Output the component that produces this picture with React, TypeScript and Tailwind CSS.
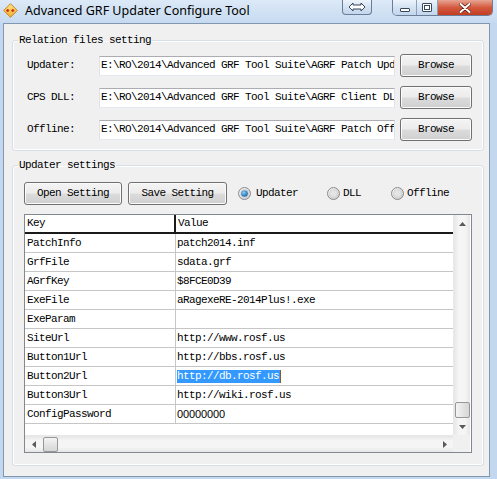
import React from "react";

const mono = "font-['Liberation_Mono','DejaVu_Sans_Mono',monospace] text-[11px] tracking-[-0.6px] text-black";
const btn =
  "flex items-center justify-center rounded-[3px] border border-[#707070] bg-[linear-gradient(to_bottom,#f4f4f4_0%,#ececec_48%,#dcdcdc_52%,#cfcfcf_100%)] shadow-[inset_0_0_0_1px_#fbfbfb]";

const files = [
  { label: "Updater:", path: "E:\\RO\\2014\\Advanced GRF Tool Suite\\AGRF Patch Upd" },
  { label: "CPS DLL:", path: "E:\\RO\\2014\\Advanced GRF Tool Suite\\AGRF Client DL" },
  { label: "Offline:", path: "E:\\RO\\2014\\Advanced GRF Tool Suite\\AGRF Patch Off" },
];

const rows = [
  ["PatchInfo", "patch2014.inf"],
  ["GrfFile", "sdata.grf"],
  ["AGrfKey", "$8FCE0D39"],
  ["ExeFile", "aRagexeRE-2014Plus!.exe"],
  ["ExeParam", ""],
  ["SiteUrl", "http://www.rosf.us"],
  ["Button1Url", "http://bbs.rosf.us"],
  ["Button2Url", "http://db.rosf.us"],
  ["Button3Url", "http://wiki.rosf.us"],
  ["ConfigPassword", "00000000"],
];

function Radio({ checked }: { checked?: boolean }) {
  return (
    <svg width="13" height="13" viewBox="0 0 13 13">
      <defs>
        <radialGradient id="rb" cx="0.35" cy="0.35" r="0.7">
          <stop offset="0" stopColor="#ffffff" />
          <stop offset="1" stopColor="#cfcfcf" />
        </radialGradient>
        <radialGradient id="rd" cx="0.4" cy="0.35" r="0.7">
          <stop offset="0" stopColor="#8fd0f6" />
          <stop offset="1" stopColor="#0d5ea6" />
        </radialGradient>
      </defs>
      <circle cx="6.5" cy="6.5" r="6" fill="url(#rb)" stroke="#8a8a8a" />
      <circle cx="6.5" cy="6.5" r="4" fill="#e4e4e4" stroke="#c4c4c4" strokeWidth="0.6" />
      {checked && <circle cx="6.5" cy="6.5" r="3.3" fill="url(#rd)" />}
    </svg>
  );
}

function Arrow({ dir }: { dir: "up" | "down" | "left" | "right" }) {
  const pts = {
    up: "0,4 3.5,0 7,4",
    down: "0,0 3.5,4 7,0",
    left: "4,0 0,3.5 4,7",
    right: "0,0 4,3.5 0,7",
  }[dir];
  const vertical = dir === "up" || dir === "down";
  return (
    <svg width={vertical ? 7 : 4} height={vertical ? 4 : 7}>
      <polygon points={pts} fill="#5a5a5a" />
    </svg>
  );
}

export default function App() {
  return (
    <div className="flex h-[479px] w-[497px] flex-col overflow-hidden bg-[#c3d7ee] font-['Noto_Sans',sans-serif]">
      {/* Title bar */}
      <div className="flex h-[23px] shrink-0 items-start bg-[linear-gradient(to_bottom,#dce9f7,#c6daf0)]">
        <svg className="ml-[3px] mt-[3px]" width="15" height="15" viewBox="0 0 15 15">
          <defs>
            <linearGradient id="ic" x1="0" y1="0" x2="0" y2="1">
              <stop offset="0" stopColor="#fde58a" />
              <stop offset="1" stopColor="#f0b02a" />
            </linearGradient>
          </defs>
          <path d="M7.5 0.7 L14.3 7.5 L7.5 14.3 L0.7 7.5Z" fill="url(#ic)" stroke="#c9831c" />
          <path d="M3.2 7.5h3M4.7 6v3M8.3 7.5h3M9.8 6v3" stroke="#d0301c" strokeWidth="1.3" />
        </svg>
        <span className="ml-[7px] mt-[2px] text-[12.5px] leading-[18px] text-black">
          Advanced GRF Updater Configure Tool
        </span>
        <div className="ml-auto flex items-start">
          <div className="mr-[20px] flex h-[15px] w-[30px] items-center justify-center rounded-b-[4px] border border-t-0 border-[#6b7d96] bg-[linear-gradient(to_bottom,#eef4fb,#d3e2f2_50%,#c3d6ec)]">
            <svg width="18" height="10" viewBox="0 0 18 10">
              <polygon points="1,5 5,1 5,3 13,3 13,1 17,5 13,9 13,7 5,7 5,9" fill="#fff" stroke="#39475a" strokeWidth="1" />
            </svg>
          </div>
          <div className="mr-[4px] flex h-[16px] overflow-hidden rounded-b-[5px] border border-t-0 border-[#6b7d96]">
            <div className="flex w-[24px] items-center justify-center border-r border-[#8ea0b8] bg-[linear-gradient(to_bottom,#eef4fb,#d3e2f2_50%,#c3d6ec)]">
              <div className="mt-[4px] h-[4px] w-[10px] rounded-[1px] border border-[#39475a] bg-white" />
            </div>
            <div className="flex w-[21px] items-center justify-center border-r border-[#8ea0b8] bg-[linear-gradient(to_bottom,#eef4fb,#d3e2f2_50%,#c3d6ec)]">
              <div className="h-[9px] w-[10px] rounded-[1px] border border-[#39475a] bg-white p-[1px]">
                <div className="h-full w-full border border-[#39475a]" />
              </div>
            </div>
            <div className="flex w-[54px] items-center justify-center bg-[linear-gradient(to_bottom,#e8a593,#d4593f_50%,#c33d22)]">
              <svg width="12" height="10" viewBox="0 0 12 10">
                <path d="M1.5 1 L10.5 9 M10.5 1 L1.5 9" stroke="#5a1c10" strokeWidth="3.4" strokeLinecap="round" />
                <path d="M1.5 1 L10.5 9 M10.5 1 L1.5 9" stroke="#fff" strokeWidth="2" strokeLinecap="round" />
              </svg>
            </div>
          </div>
        </div>
      </div>

      {/* Client area */}
      <div className="ml-[3px] flex h-[454px] w-[487px] flex-col border border-[#8196b1] bg-[#f0f0f0]">
        {/* Relation files setting */}
        <fieldset className="ml-[8px] mt-[10px] w-[472px] rounded-[3px] border border-[#d5dfe5] shadow-[inset_0_0_0_1px_#ffffff]">
          <legend className={`ml-[5px] px-[1px] leading-[12px] ${mono}`}>Relation files setting</legend>
          <div className="flex flex-col gap-[9px] pb-[9px] pl-[14px] pr-[10px] pt-[8px]">
            {files.map((f) => (
              <div key={f.label} className="flex h-[23px] items-center">
                <span className={`w-[72px] ${mono}`}>{f.label}</span>
                <div className="flex h-[20px] w-[296px] items-center overflow-hidden whitespace-nowrap border border-[#abadb3] border-l-[#e2e3ea] border-r-[#e2e3ea] border-b-[#e3e9ef] bg-white pl-[1px]">
                  <span className={mono}>{f.path}</span>
                </div>
                <div className={`ml-[5px] h-[23px] w-[72px] ${btn}`}>
                  <span className={mono}>Browse</span>
                </div>
              </div>
            ))}
          </div>
        </fieldset>

        {/* Updater settings */}
        <fieldset className="ml-[8px] mt-[8px] w-[472px] rounded-[3px] border border-[#d5dfe5] shadow-[inset_0_0_0_1px_#ffffff]">
          <legend className={`ml-[5px] px-[1px] leading-[12px] ${mono}`}>Updater settings</legend>
          <div className="pb-[12px] pl-[11px] pt-[11px]">
            <div className="flex h-[23px] items-center">
              <div className={`h-[23px] w-[98px] ${btn}`}>
                <span className={mono}>Open Setting</span>
              </div>
              <div className={`ml-[6px] h-[23px] w-[99px] ${btn}`}>
                <span className={mono}>Save Setting</span>
              </div>
              <div className="ml-[11px] flex w-[89px] items-center gap-[5px]">
                <Radio checked />
                <span className={mono}>Updater</span>
              </div>
              <div className="flex w-[64px] items-center gap-[3px]">
                <Radio />
                <span className={mono}>DLL</span>
              </div>
              <div className="flex items-center gap-[3px]">
                <Radio />
                <span className={mono}>Offline</span>
              </div>
            </div>

            {/* Grid */}
            <div className="mt-[9px] flex h-[239px] w-[448px] flex-col border border-[#828790] bg-white">
              <div className="flex h-[220px]">
                <div className="flex w-[428px] flex-col">
                  <div className="flex h-[19px] shrink-0 border-b-2 border-[#1a1a1a]">
                    <div className="flex w-[151px] items-center border-r-2 border-[#1a1a1a] pl-[2px]">
                      <span className={mono}>Key</span>
                    </div>
                    <div className="flex flex-1 items-center pl-[2px]">
                      <span className={mono}>Value</span>
                    </div>
                  </div>
                  {rows.map(([k, v]) => (
                    <div key={k} className="flex h-[19px] shrink-0 border-b border-[#c6c6c6]">
                      <div className="flex w-[151px] items-center border-r border-[#c6c6c6] pl-[2px]">
                        <span className={mono}>{k}</span>
                      </div>
                      <div className="flex flex-1 items-center pl-[1px]">
                        {k === "Button2Url" ? (
                          <span className="flex h-[13px] items-center border-r border-[#8a5a2a] bg-[#3399ff] pr-[1px]">
                            <span className={`${mono} text-white`}>{v}</span>
                          </span>
                        ) : k === "ConfigPassword" ? (
                          <span className="font-['Liberation_Sans',sans-serif] text-[11px] tracking-[-0.1px] text-black">{v}</span>
                        ) : (
                          <span className={mono}>{v}</span>
                        )}
                      </div>
                    </div>
                  ))}
                </div>
                {/* Vertical scrollbar */}
                <div className="flex w-[17px] flex-col items-center border-l border-[#e8e8e8] bg-[linear-gradient(to_right,#e6e6e6,#f5f5f5_30%,#f5f5f5_70%,#e6e6e6)]">
                  <div className="flex h-[17px] w-full items-center justify-center">
                    <Arrow dir="up" />
                  </div>
                  <div className="mt-[170px] h-[16px] w-[15px] rounded-[2px] border border-[#979797] bg-[linear-gradient(to_right,#f4f4f4,#e4e4e4_50%,#d6d6d6)]" />
                  <div className="mt-auto flex h-[17px] w-full items-center justify-center">
                    <Arrow dir="down" />
                  </div>
                </div>
              </div>
              {/* Horizontal scrollbar */}
              <div className="flex h-[17px]">
                <div className="flex w-[428px] items-center border-t border-[#e8e8e8] bg-[linear-gradient(to_bottom,#e6e6e6,#f5f5f5_30%,#f5f5f5_70%,#e6e6e6)]">
                  <div className="flex h-full w-[17px] items-center justify-center">
                    <Arrow dir="left" />
                  </div>
                  <div className="ml-[1px] h-[15px] w-[15px] rounded-[2px] border border-[#979797] bg-[linear-gradient(to_bottom,#f4f4f4,#e4e4e4_50%,#d6d6d6)]" />
                  <div className="ml-auto flex h-full w-[17px] items-center justify-center">
                    <Arrow dir="right" />
                  </div>
                </div>
                <div className="w-[17px] bg-[#f0f0f0]" />
              </div>
            </div>
          </div>
        </fieldset>
      </div>
    </div>
  );
}
